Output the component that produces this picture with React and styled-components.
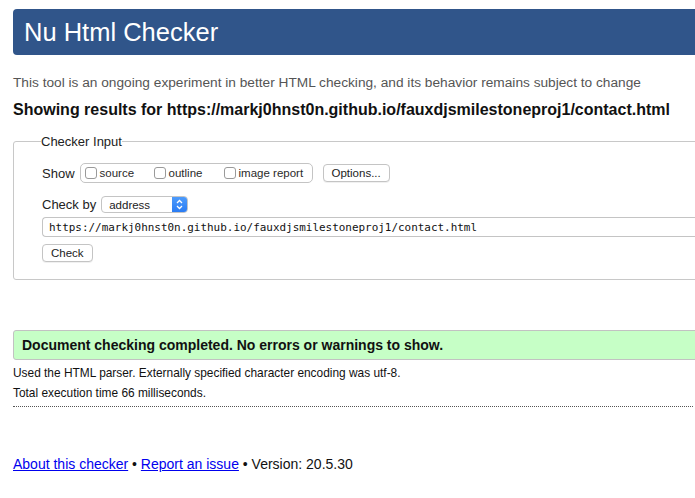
import React from "react";
import styled, { createGlobalStyle } from "styled-components";

const GlobalStyle = createGlobalStyle`
    html, body {
        margin: 0;
        padding: 0;
        overflow: hidden;
        background: #fff;
    }
    body {
        font-family: "Liberation Sans", Arial, sans-serif;
        color: #111;
    }
`;

const Page = styled.div`
    box-sizing: border-box;
    width: 760px;
    padding: 9px 0 0 13px;
`;

const Header = styled.h1`
    box-sizing: border-box;
    margin: 0;
    height: 46px;
    padding: 0 11px;
    display: flex;
    align-items: center;
    background-color: #30558a;
    color: #fff;
    font-size: 25.5px;
    font-weight: normal;
    border-radius: 4px;
`;

const Intro = styled.p`
    margin: 20px 0 0;
    font-size: 13.7px;
    line-height: 16px;
    color: #555;
`;

const ResultsFor = styled.h2`
    margin: 9px 0 0;
    font-size: 16px;
    line-height: 20px;
    font-weight: bold;
`;

const Fieldset = styled.fieldset`
    box-sizing: border-box;
    margin: 14px 0 0;
    padding: 8px 0 15px 28px;
    height: 146px;
    border: 1px solid #c8c8c8;
    border-radius: 3px;
`;

const Legend = styled.legend`
    padding: 0;
    margin-left: -1px;
    font-size: 13px;
    color: #222;
`;

const Row = styled.div`
    display: flex;
    align-items: center;
    gap: ${(p) => p.$gap || 4}px;
    margin-top: ${(p) => p.$top || 0}px;
    font-size: 13px;
`;

const Label = styled.span`
    font-size: 13px;
    color: #222;
`;

const Group = styled.div`
    box-sizing: border-box;
    display: flex;
    align-items: center;
    width: 233px;
    height: 20px;
    padding: 0 4px;
    border: 1px solid #c4c4c4;
    border-radius: 5px;
`;

const Option = styled.label`
    display: flex;
    align-items: center;
    gap: 3px;
    width: ${(p) => p.$w}px;
    font-size: 11.5px;
    color: #2a2a2a;
`;

const Box = styled.span`
    box-sizing: border-box;
    display: inline-block;
    width: 12px;
    height: 12px;
    border: 1px solid #9a9a9a;
    border-radius: 3px;
    background: #fff;
`;

const Button = styled.button`
    box-sizing: border-box;
    height: 18px;
    margin-left: ${(p) => p.$left || 0}px;
    padding: 0 ${(p) => p.$pad || 8}px;
    font-family: "Liberation Sans", Arial, sans-serif;
    font-size: 11.5px;
    color: #222;
    background: #fff;
    border: 1px solid #c4c4c4;
    border-radius: 4px;
    box-shadow: 0 1px 0 rgba(0, 0, 0, 0.06);
`;

const Select = styled.div`
    box-sizing: border-box;
    display: flex;
    align-items: stretch;
    width: 87px;
    height: 17px;
    border: 1px solid #c4c4c4;
    border-radius: 4px;
    overflow: hidden;
    font-size: 11.5px;
    color: #222;
`;

const SelectText = styled.span`
    flex: 1;
    display: flex;
    align-items: center;
    padding-left: 7px;
`;

const Stepper = styled.span`
    width: 15px;
    display: flex;
    align-items: center;
    justify-content: center;
    background: linear-gradient(#4d9bfb, #2a7cf4);
`;

const UrlInput = styled.div`
    box-sizing: border-box;
    display: flex;
    align-items: center;
    height: 20px;
    margin-top: 4px;
    padding-left: 6px;
    border: 1px solid #c4c4c4;
    border-right: none;
    border-radius: 4px 0 0 4px;
    font-family: "DejaVu Sans Mono", monospace;
    font-size: 10.95px;
    color: #111;
    white-space: nowrap;
`;

const Notice = styled.div`
    box-sizing: border-box;
    display: flex;
    align-items: center;
    height: 30px;
    margin-top: 50px;
    padding-left: 8px;
    background-color: #c6ffc6;
    border: 1px solid #c2c2c2;
    border-radius: 3px;
    font-size: 14px;
    font-weight: bold;
`;

const Details = styled.div`
    margin-top: 3px;
    padding-bottom: 3px;
    width: 680px;
    border-bottom: 1px dotted #555;
`;

const DetailLine = styled.p`
    margin: 0;
    font-size: 11.9px;
    line-height: 20px;
    color: #111;
`;

const Footer = styled.p`
    margin: 49px 0 0;
    font-size: 14px;
    color: #111;
`;

const Link = styled.a`
    color: #0000ee;
    text-decoration: underline;
`;

function Chevrons() {
    return (
        <svg width="7" height="11" viewBox="0 0 7 11">
            <path
                d="M1 4 L3.5 1.5 L6 4 M1 7 L3.5 9.5 L6 7"
                fill="none"
                stroke="#fff"
                strokeWidth="1.3"
            />
        </svg>
    );
}

export default function App() {
    return (
        <Page>
            <GlobalStyle />
            <Header>Nu Html Checker</Header>
            <Intro>
                This tool is an ongoing experiment in better HTML checking, and
                its behavior remains subject to change
            </Intro>
            <ResultsFor>
                Showing results for
                https://markj0hnst0n.github.io/fauxdjsmilestoneproj1/contact.html
            </ResultsFor>
            <Fieldset>
                <Legend>Checker Input</Legend>
                <Row $gap={5} $top={6}>
                    <Label>Show</Label>
                    <Group>
                        <Option $w={69}>
                            <Box />
                            source
                        </Option>
                        <Option $w={70}>
                            <Box />
                            outline
                        </Option>
                        <Option>
                            <Box />
                            image report
                        </Option>
                    </Group>
                    <Button $pad={8} $left={5}>
                        Options...
                    </Button>
                </Row>
                <Row $gap={5} $top={13}>
                    <Label>Check by</Label>
                    <Select>
                        <SelectText>address</SelectText>
                        <Stepper>
                            <Chevrons />
                        </Stepper>
                    </Select>
                </Row>
                <UrlInput>
                    https://markj0hnst0n.github.io/fauxdjsmilestoneproj1/contact.html
                </UrlInput>
                <Row $top={7}>
                    <Button $pad={8}>Check</Button>
                </Row>
            </Fieldset>
            <Notice>Document checking completed. No errors or warnings to show.</Notice>
            <Details>
                <DetailLine>
                    Used the HTML parser. Externally specified character encoding
                    was utf-8.
                </DetailLine>
                <DetailLine>Total execution time 66 milliseconds.</DetailLine>
            </Details>
            <Footer>
                <Link href="#">About this checker</Link> •{" "}
                <Link href="#">Report an issue</Link> • Version: 20.5.30
            </Footer>
        </Page>
    );
}
